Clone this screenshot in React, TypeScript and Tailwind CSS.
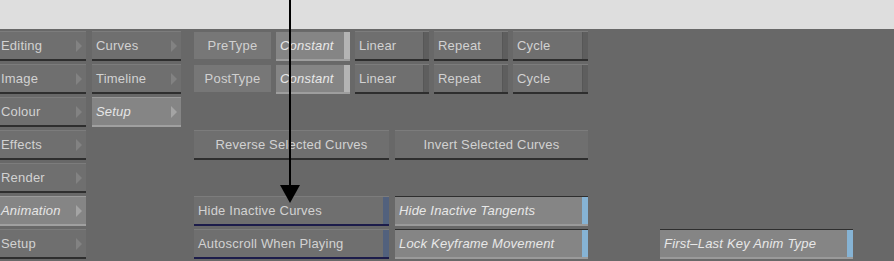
import React from 'react';

const font = { fontFamily: '"Liberation Sans", Arial, sans-serif' };

// menu button with the little play-arrow on the right
const MenuButton: React.FC<{ label: string; width: string; active?: boolean }> = ({ label, width, active }) => (
  <div
    className={`${width} h-[30px] flex items-center justify-between border-t border-b-2 pr-1 ${
      active
        ? 'bg-[#858585] border-t-[#9a9a9a] border-b-[#a0a0a0] text-[#e6e6e6] italic'
        : 'bg-[#6f6f6f] border-t-[#7c7c7c] border-b-[#2e2e2e] text-[#d2d2d2]'
    }`}
  >
    <span className="text-[13px] leading-none tracking-[0.2px]">{label}</span>
    <span
      className={`w-0 h-0 border-y-[6px] border-y-transparent border-l-[6px] ${
        active ? 'border-l-[#a4a4a4]' : 'border-l-[#828282]'
      }`}
    ></span>
  </div>
);

// toggle / option button with stripe on the right edge
const OptButton: React.FC<{
  label: string;
  width: string;
  variant?: 'plain' | 'selected' | 'blue' | 'blueOn';
  center?: boolean;
}> = ({ label, width, variant = 'plain', center }) => {
  const styles = {
    plain: {
      box: 'bg-[#6f6f6f] border-t-[#7c7c7c] border-b-[#2e2e2e] text-[#d2d2d2]',
      stripe: 'bg-[#5e5e5e] border-l border-l-[#575757]',
    },
    selected: {
      box: 'bg-[#858585] border-t-[#6a6a6a] border-b-[#9e9e9e] text-[#e8e8e8] italic',
      stripe: 'bg-[#b4b4b4]',
    },
    blue: {
      box: 'bg-[#6f6f6f] border-t-[#7c7c7c] border-b-[#1c1c4a] text-[#d2d2d2]',
      stripe: 'bg-[#52617d]',
    },
    blueOn: {
      box: 'bg-[#858585] border-t-[#2e2e2e] border-b-[#9a9a9a] text-[#e8e8e8] italic',
      stripe: 'bg-[#86b3d4]',
    },
  }[variant];
  const hasStripe = !center;
  return (
    <div className={`${width} h-[30px] flex items-stretch border-t border-b-2 ${styles.box}`}>
      <div className={`flex-1 flex items-center ${center ? 'justify-center' : 'pl-1'}`}>
        <span className="text-[13px] leading-none tracking-[0.2px]">{label}</span>
      </div>
      {hasStripe && <div className={`w-[6px] ${styles.stripe}`}></div>}
    </div>
  );
};

const Label: React.FC<{ label: string }> = ({ label }) => (
  <div className="w-[77px] h-[27px] mt-[1px] bg-[#777777] flex items-center justify-center text-[#d0d0d0]">
    <span className="text-[13px] leading-none tracking-[0.2px]">{label}</span>
  </div>
);

const Empty = () => <div className="h-[30px]"></div>;

const App: React.FC = () => {
  return (
    <div className="w-[894px] h-[261px] bg-[#686868] relative overflow-hidden" style={font}>
      <div className="h-[29px] bg-[#dedede]"></div>

      <div className="flex pt-[2px]">
        {/* main menu */}
        <div className="flex flex-col gap-[3px] w-[86px] [&>div]:pl-[1px]">
          <MenuButton label="Editing" width="w-[86px]" />
          <MenuButton label="Image" width="w-[86px]" />
          <MenuButton label="Colour" width="w-[86px]" />
          <MenuButton label="Effects" width="w-[86px]" />
          <MenuButton label="Render" width="w-[86px]" />
          <MenuButton label="Animation" width="w-[86px]" active />
          <MenuButton label="Setup" width="w-[86px]" />
        </div>

        {/* sub menu */}
        <div className="flex flex-col gap-[3px] ml-[6px] [&>div]:pl-1">
          <MenuButton label="Curves" width="w-[89px]" />
          <MenuButton label="Timeline" width="w-[89px]" />
          <MenuButton label="Setup" width="w-[89px]" active />
        </div>

        {/* setup panel */}
        <div className="flex flex-col gap-[3px] ml-[13px]">
          <div className="flex gap-[5px]">
            <Label label="PreType" />
            <OptButton label="Constant" width="w-[74px]" variant="selected" />
            <OptButton label="Linear" width="w-[74px]" />
            <OptButton label="Repeat" width="w-[74px]" />
            <OptButton label="Cycle" width="w-[75px]" />
          </div>
          <div className="flex gap-[5px]">
            <Label label="PostType" />
            <OptButton label="Constant" width="w-[74px]" variant="selected" />
            <OptButton label="Linear" width="w-[74px]" />
            <OptButton label="Repeat" width="w-[74px]" />
            <OptButton label="Cycle" width="w-[75px]" />
          </div>
          <Empty />
          <div className="flex gap-[6px]">
            <OptButton label="Reverse Selected Curves" width="w-[195px]" center />
            <OptButton label="Invert Selected Curves" width="w-[193px]" center />
          </div>
          <Empty />
          <div className="flex gap-[6px]">
            <OptButton label="Hide Inactive Curves" width="w-[195px]" variant="blue" />
            <OptButton label="Hide Inactive Tangents" width="w-[193px]" variant="blueOn" />
          </div>
          <div className="flex gap-[6px]">
            <OptButton label="Autoscroll When Playing" width="w-[195px]" variant="blue" />
            <OptButton label="Lock Keyframe Movement" width="w-[193px]" variant="blueOn" />
            <div className="ml-[66px]">
              <OptButton label="First–Last Key Anim Type" width="w-[193px]" variant="blueOn" />
            </div>
          </div>
        </div>
      </div>

      {/* callout arrow */}
      <div className="absolute left-[289px] top-0 w-[2px] h-[188px] bg-black"></div>
      <div className="absolute left-[280px] top-[185px] w-0 h-0 border-x-[10px] border-x-transparent border-t-[18px] border-t-black"></div>
    </div>
  );
};

export default App;
